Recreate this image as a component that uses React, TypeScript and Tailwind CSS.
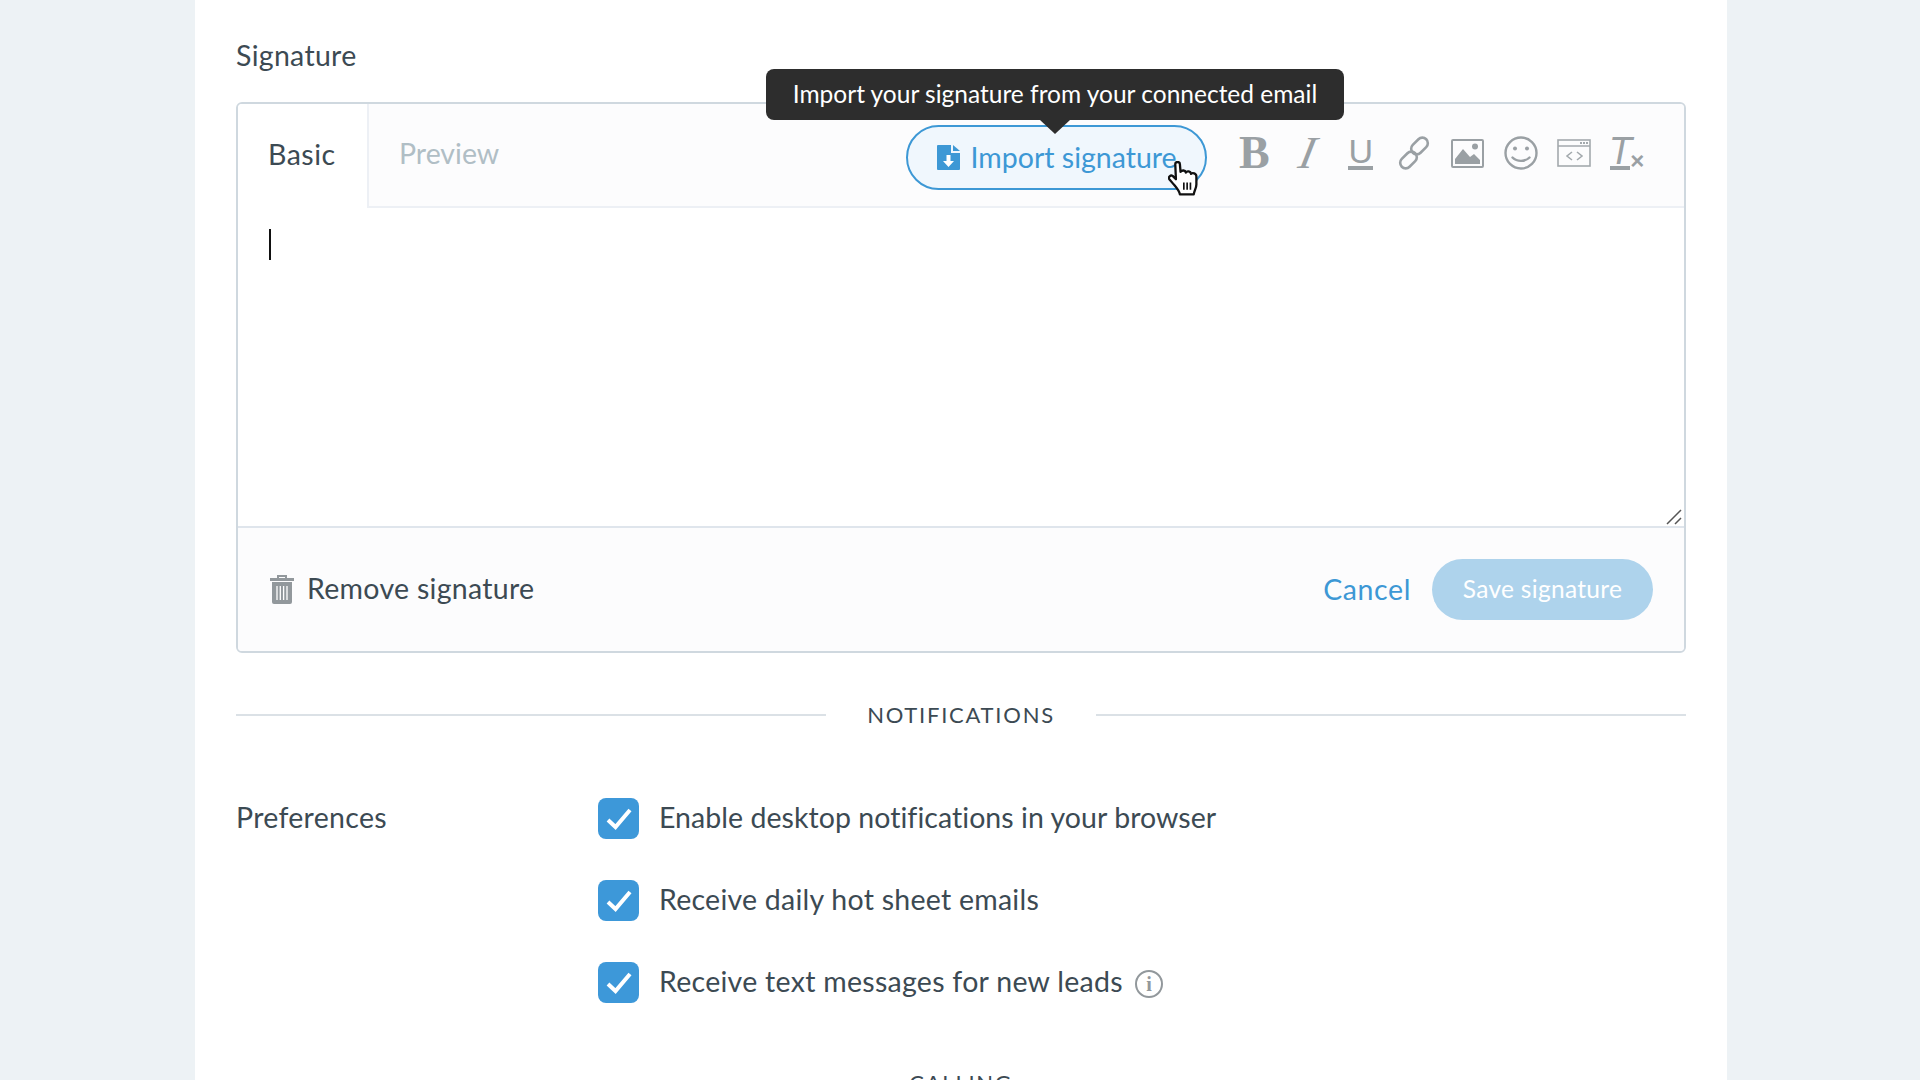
import React from "react";

const sans = "font-['Lato','Noto_Sans',sans-serif]";

function ImportIcon() {
  return (
    <svg width="23" height="25" viewBox="0 0 23 25" className="shrink-0 translate-x-px">
      <path d="M1 0h13v8h9v16a1 1 0 0 1-1 1H1a1 1 0 0 1-1-1V1a1 1 0 0 1 1-1z" fill="#3d98d5" />
      <path d="M16 0l7 6h-7z" fill="#3d98d5" />
      <path d="M9.500 10h4v6h3.500l-5.500 6-5.500-6h3.500z" fill="#fff" />
    </svg>
  );
}

function HandCursor() {
  return (
    <svg width="33" height="37" viewBox="0 0 100 110" className="absolute left-[1168px] top-[161px]">
      <path
        d="M22 8C22 0 36 0 36 8L38 32C42 26 52 26 54 34C58 28 68 30 70 38C74 33 86 36 86 46L86 70C86 80 80 88 78 100L36 100C34 88 24 78 14 66L4 54C0 48 8 40 14 44L24 54Z"
        fill="#fff"
        stroke="#111"
        strokeWidth="7"
        strokeLinejoin="round"
      />
      <path d="M48 64V86M58 64V86M68 64V86" stroke="#111" strokeWidth="5" />
    </svg>
  );
}

function LinkIcon() {
  return (
    <svg width="34" height="34" viewBox="0 0 34 34" fill="none" stroke="#9aa0a4" strokeWidth="2.600">
      <rect x="13" y="4.500" width="19" height="11" rx="5.500" transform="rotate(-45 22.500 10)" />
      <rect x="2" y="18.500" width="19" height="11" rx="5.500" transform="rotate(-45 11.500 24)" />
    </svg>
  );
}

function ImageIcon() {
  return (
    <svg width="33" height="29" viewBox="0 0 33 29">
      <rect x="1" y="1" width="31" height="27" rx="1" fill="none" stroke="#9aa0a4" strokeWidth="2" />
      <circle cx="24" cy="7.500" r="3" fill="#9aa0a4" />
      <path d="M4 25v-5l8-10 7 8 4-3 6 6v4z" fill="#9aa0a4" />
    </svg>
  );
}

function SmileIcon() {
  return (
    <svg width="34" height="34" viewBox="0 0 34 34" fill="none" stroke="#9aa0a4" strokeWidth="2.400">
      <circle cx="17" cy="17" r="15.500" />
      <circle cx="11" cy="12.500" r="2" fill="#9aa0a4" stroke="none" />
      <circle cx="23" cy="12.500" r="2" fill="#9aa0a4" stroke="none" />
      <path d="M8.500 21.500c4.500 4.500 12.500 4.500 17 0" strokeLinecap="round" />
    </svg>
  );
}

function CodeIcon() {
  return (
    <svg width="34" height="28" viewBox="0 0 34 28" fill="none" stroke="#a3a9ad" strokeWidth="1.600">
      <rect x="1" y="1" width="32" height="26" />
      <path d="M1 7h32" />
      <path d="M15 13l-5 4 5 4M20 13l5 4-5 4" />
      <path d="M23 4h2M26 4h2M29 4h2" strokeWidth="1.800" />
    </svg>
  );
}

function TrashIcon() {
  return (
    <svg width="24" height="29" viewBox="0 0 24 29" className="shrink-0">
      <path d="M8 3V1h8v2" fill="none" stroke="#92989c" strokeWidth="2" />
      <rect x="0" y="3" width="24" height="3" fill="#92989c" />
      <path d="M2 7h20v20a2 2 0 0 1-2 2H4a2 2 0 0 1-2-2z" fill="#92989c" />
      <path d="M7 11v14M10.300 11v14M13.600 11v14M17 11v14" stroke="#fff" strokeWidth="1.300" />
    </svg>
  );
}

function CheckRow({ label, tracking, children }: { label: string; tracking: string; children?: React.ReactNode }) {
  return (
    <div className="flex items-center h-[41px]">
      <div className="w-[41px] h-[41px] rounded-lg bg-[#3d98d9] flex items-center justify-center shrink-0">
        <svg width="26" height="22" viewBox="0 0 26 22" fill="none" stroke="#fff" strokeWidth="4">
          <path d="M2 12l7.500 7L24 2" />
        </svg>
      </div>
      <span className={`ml-[20px] pb-[3px] text-[28.500px] text-[#3c4a53] leading-none ${tracking}`}>{label}</span>
      {children}
    </div>
  );
}

function SectionTitle({ title }: { title: string }) {
  return (
    <div className="flex items-center h-[26px]">
      <div className="flex-1 h-[2px] bg-[#dbe1e6]" />
      <span className="px-[41px] text-[22px] tracking-[1.750px] text-[#3c4a53] leading-none">{title}</span>
      <div className="flex-1 h-[2px] bg-[#dbe1e6]" />
    </div>
  );
}

export default function App() {
  return (
    <div className={`relative h-screen overflow-hidden bg-[#edf2f5] ${sans}`}>
      <div className="ml-[195px] w-[1532px] h-full bg-white px-[41px] pt-[37px]">
        <div className="text-[28.500px] leading-[36px] text-[#3c4a53] tracking-[0.300px]">Signature</div>

        <div className="mt-[29px] h-[551px] border-2 border-[#cfd8df] rounded-md flex flex-col overflow-hidden">
          <div className="flex h-[104px] shrink-0">
            <div className="w-[131px] bg-white border-r-2 border-[#edf0f5] pl-[30px] pb-[4px] flex items-center text-[28.500px] text-[#3c4a53] tracking-[0.500px]">
              Basic
            </div>
            <div className="flex-1 flex items-center bg-[#fcfcfd] border-b-2 border-[#edf0f5] pr-[30px]">
              <span className="pl-[30px] pb-[4px] text-[28.500px] text-[#b0bec5]">Preview</span>
              <button className="ml-auto mr-[21px] mt-[4px] w-[301px] h-[65px] rounded-full border-2 border-[#3d98d5] bg-[#f0f7fd] flex items-center justify-center gap-[12px] text-[28.500px] text-[#3d98d5]">
                <ImportIcon />
                Import signature
              </button>
              <div className="flex items-center text-[#9aa0a4] pb-[4px]">
                <div className="w-[53.300px] flex justify-center font-['Liberation_Serif',serif] font-bold text-[46px] leading-none">B</div>
                <div className="w-[53.300px] flex justify-center font-['Liberation_Serif',serif] italic text-[46px] leading-none">
                  <span className="-skew-x-12">I</span>
                </div>
                <div className="w-[53.300px] flex justify-center">
                  <span className="font-['Liberation_Sans',sans-serif] text-[34px] leading-[30px] border-b-[4px] border-[#9aa0a4] w-[25px] flex justify-center">U</span>
                </div>
                <div className="w-[53.300px] flex justify-center"><LinkIcon /></div>
                <div className="w-[53.300px] flex justify-center"><ImageIcon /></div>
                <div className="w-[53.300px] flex justify-center"><SmileIcon /></div>
                <div className="w-[53.300px] flex justify-center"><CodeIcon /></div>
                <div className="w-[53.300px] flex justify-center items-end">
                  <span className="font-['Liberation_Sans',sans-serif] italic text-[38px] leading-[30px] border-b-[4px] border-[#9aa0a4] w-[20px] flex justify-center">T</span>
                  <span className="font-['Liberation_Sans',sans-serif] font-bold text-[24px] leading-[18px]">×</span>
                </div>
              </div>
            </div>
          </div>

          <div className="relative flex-1 bg-white pl-[31px] pt-[21px]">
            <div className="w-[2px] h-[31px] bg-[#111]" />
            <svg width="16" height="16" viewBox="0 0 16 16" className="absolute right-[2px] bottom-[1px]" fill="none" stroke="#555" strokeWidth="1.500">
              <path d="M1 15L15 1M9 15l6-6" />
            </svg>
          </div>

          <div className="h-[125px] shrink-0 border-t-2 border-[#dfe5ec] bg-[#fcfcfd] flex items-center pl-[32px] pr-[31px]">
            <TrashIcon />
            <span className="ml-[13px] pb-[3px] text-[28.500px] text-[#3c4a53] tracking-[0.300px]">Remove signature</span>
            <span className="ml-auto text-[28.500px] text-[#3d98d5] tracking-[0.600px]">Cancel</span>
            <button className="ml-[21px] w-[221px] h-[61px] rounded-full bg-[#aed3ec] text-white text-[24.500px] tracking-[0.300px]">Save signature</button>
          </div>
        </div>

        <div className="mt-[49px]">
          <SectionTitle title="NOTIFICATIONS" />
        </div>

        <div className="mt-[70px] flex">
          <div className="w-[362px] h-[41px] pb-[3px] flex items-center text-[28.500px] text-[#3c4a53] tracking-[0.300px]">Preferences</div>
          <div className="flex flex-col gap-[41px]">
            <CheckRow label="Enable desktop notifications in your browser" tracking="tracking-[0.050px]" />
            <CheckRow label="Receive daily hot sheet emails" tracking="tracking-[0.250px]" />
            <CheckRow label="Receive text messages for new leads" tracking="tracking-[0.280px]">
              <span className="ml-[12px] mt-[3px] w-[28px] h-[28px] rounded-full border-[2.500px] border-[#92989c] flex items-center justify-center font-['Liberation_Serif',serif] font-bold text-[20px] text-[#92989c] leading-none">i</span>
            </CheckRow>
          </div>
        </div>

        <div className="mt-[67px]">
          <SectionTitle title="CALLING" />
        </div>
      </div>

      <div className="absolute left-[766px] top-[69px] w-[578px] h-[51px] rounded-lg bg-[#2d2d2d] flex items-center justify-center text-[24.500px] text-white">
        Import your signature from your connected email
      </div>
      <div className="absolute left-[1040px] top-[120px] w-0 h-0 border-x-[15px] border-x-transparent border-t-[14px] border-t-[#2d2d2d]" />
      <HandCursor />
    </div>
  );
}
